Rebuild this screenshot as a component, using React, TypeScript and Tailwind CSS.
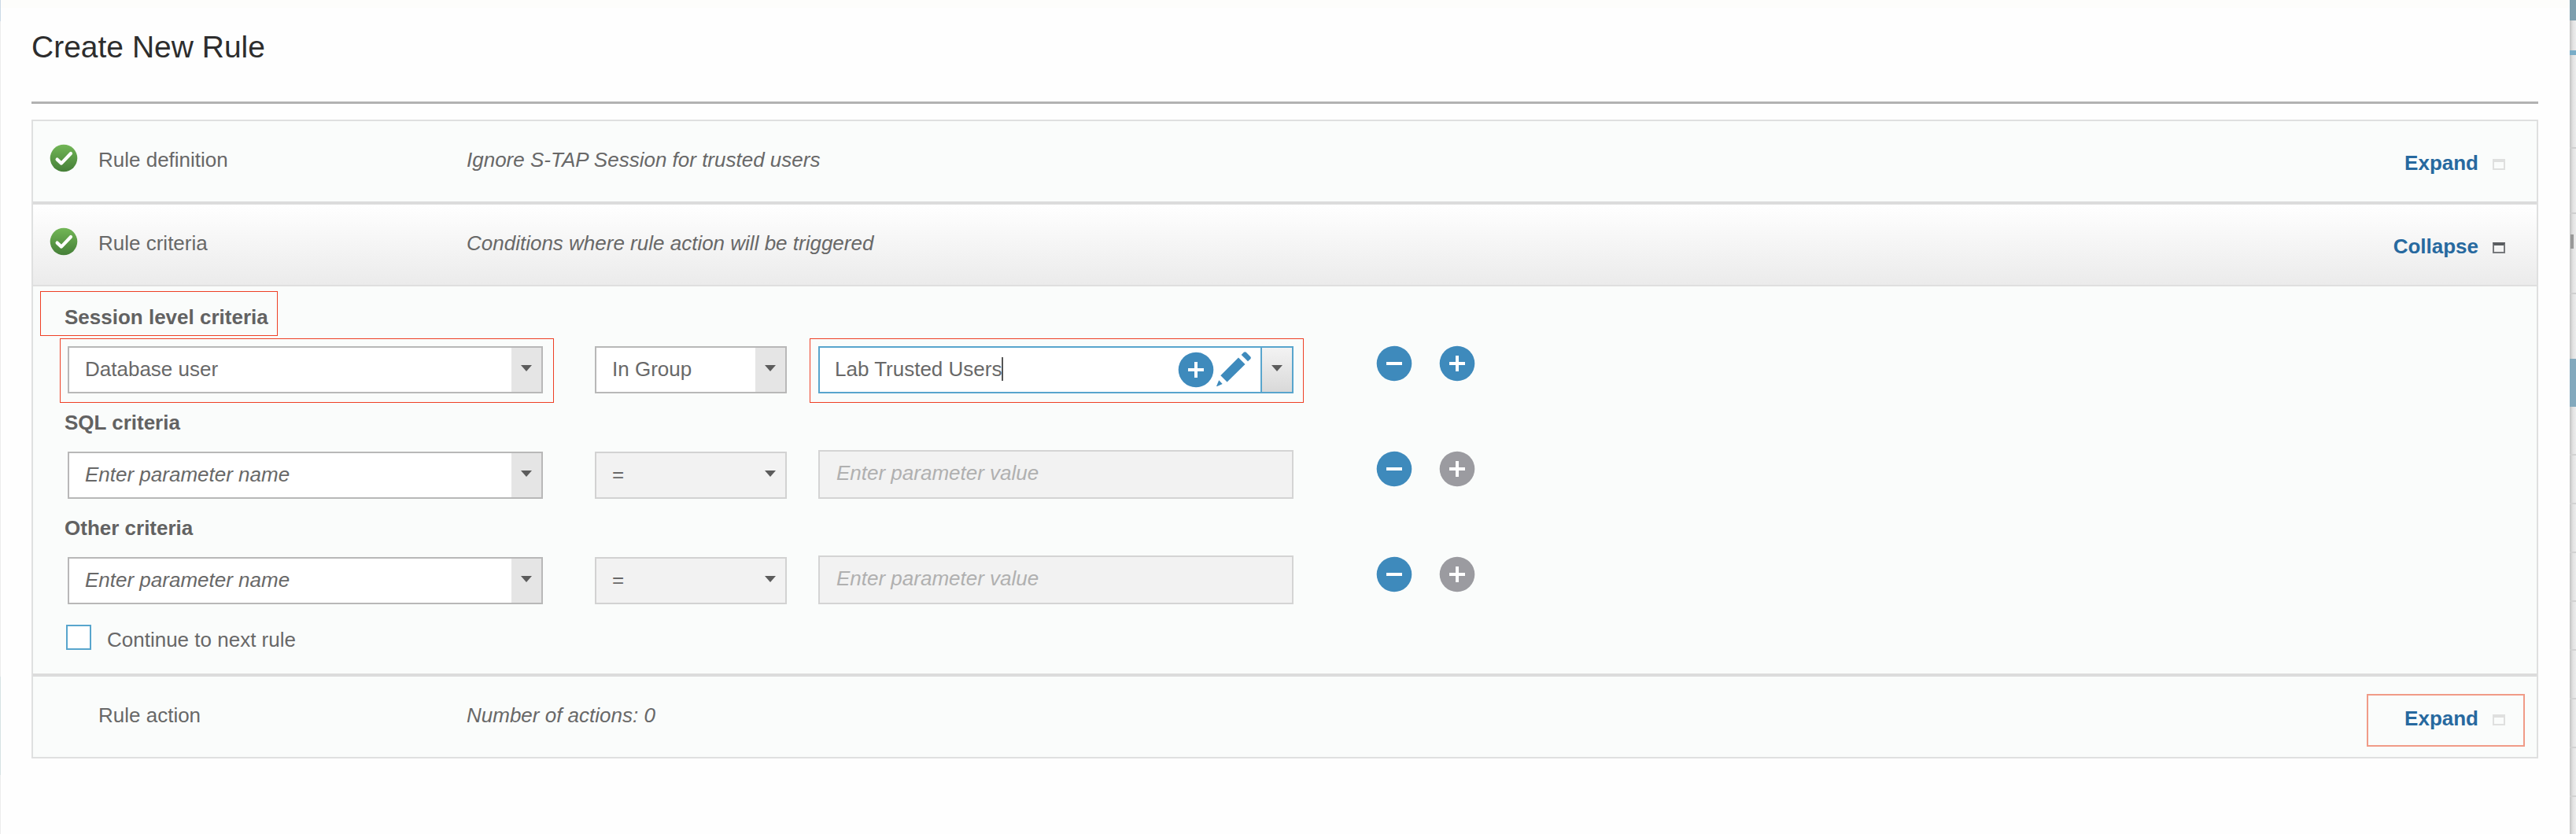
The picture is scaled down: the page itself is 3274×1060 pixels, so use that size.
import type { ReactNode } from "react";

const textBase = "text-[26px] leading-[30px] whitespace-pre";

function Check() {
  return (
    <svg width="36" height="36" viewBox="0 0 36 36" className="shrink-0">
      <defs>
        <linearGradient id="ok" x1="0" y1="0" x2="0" y2="1">
          <stop offset="0" stopColor="#72b656" />
          <stop offset="1" stopColor="#457f38" />
        </linearGradient>
      </defs>
      <circle cx="18" cy="18" r="17.3" fill="url(#ok)" />
      <path d="M9.6 19.6L15 24.6L27 12" fill="none" stroke="#fff" strokeWidth="4.2" strokeLinecap="round" strokeLinejoin="round" />
    </svg>
  );
}

function Triangle() {
  return (
    <svg width="14" height="8" viewBox="0 0 14 8" className="block">
      <path d="M0 0H14L7 8Z" fill="#5c5c5c" />
    </svg>
  );
}

function RoundIcon({ kind, muted = false }: { kind: "plus" | "minus"; muted?: boolean }) {
  return (
    <svg width="46" height="46" viewBox="0 0 46 46" className="block shrink-0">
      <circle cx="23" cy="23" r="22.3" fill={muted ? "#9b9ba0" : "#3e8abc"} />
      <path d={kind === "plus" ? "M13 23H33M23 13V33" : "M13 23H33"} stroke="#fff" strokeWidth="4" />
    </svg>
  );
}

function Pencil() {
  return (
    <svg width="44" height="44" viewBox="0 0 44 44" className="block shrink-0" fill="#3e8abc">
      <path d="M0 44L3.2 36.3L7.7 41L1 44Z" />
      <path d="M5.3 30.2L28 7.5L36.5 16L13.6 38.5Z" />
      <path d="M31.7 4L34.8 .8Q36.3-.5 37.8 .8L43.2 6.3Q44.5 7.7 43.2 9.2L40 12.3Z" />
    </svg>
  );
}

function StateBox({ dark = false }: { dark?: boolean }) {
  return (
    <span
      className={
        dark
          ? "block h-[14px] w-4 border-2 border-t-4 border-[#77797c] border-t-[#5a5d60]"
          : "block h-[14px] w-4 border-2 border-t-4 border-[#dfe0df]"
      }
    />
  );
}

function SectionHeader({ done, title, summary, action, dark = false, marked = false }: {
  done: boolean; title: string; summary: string; action: string; dark?: boolean; marked?: boolean;
}) {
  return (
    <div className="flex h-[102px] items-start pt-[34px] pl-[21px] pr-[40px] text-[#686868]">
      <div className="-mt-[5px] h-9 w-9">{done && <Check />}</div>
      <div className={`${textBase} ml-[26px] w-[468px]`}>{title}</div>
      <div className={`${textBase} italic`}>{summary}</div>
      <button className={`${textBase} relative mt-1 ml-auto flex items-start font-bold text-[#27699f]`}>
        <span>{action}</span>
        <span className="mt-[10px] ml-[18px]"><StateBox dark={dark} /></span>
        {marked && <span className="absolute -top-4 -right-[25px] h-[67px] w-[201px] border-2 border-[#f09b87]" />}
      </button>
    </div>
  );
}

function Select({ children, wide = false, disabled = false, marked = false }: {
  children: ReactNode; wide?: boolean; disabled?: boolean; marked?: boolean;
}) {
  return (
    <div
      className={`relative flex h-[60px] shrink-0 items-stretch border-2 ${wide ? "w-[604px]" : "w-[244px]"} ${
        disabled ? "border-[#d2d2d2] bg-[#f2f2f2]" : "border-[#b8b8b8] bg-white"
      }`}
    >
      <div className={`${textBase} flex-1 pt-[12px] pl-5 text-[#686868]`}>{children}</div>
      <div className={`flex w-[38px] items-center justify-center pb-1 ${disabled ? "" : "bg-[#e5e5e5]"}`}>
        <Triangle />
      </div>
      {marked && <span className="absolute -top-3 -left-3 h-[82px] w-[628px] border border-[#ee4026]" />}
    </div>
  );
}

function GroupInput() {
  return (
    <div className="relative flex h-[60px] w-[604px] shrink-0 border-2 border-[#58a5cd] bg-white">
      <div className={`${textBase} flex flex-1 pt-[12px] pl-[19px] text-[#686868]`}>
        <span>Lab Trusted Users</span>
        <span className="h-[30px] w-0.5 bg-[#555]" />
      </div>
      <div className="flex items-start gap-[3px] pt-[5px] pr-[12px]">
        <RoundIcon kind="plus" />
        <Pencil />
      </div>
      <div className="flex w-[40px] items-center justify-center border-l-2 border-[#58a5cd] bg-linear-to-b from-[#f3f3f3] to-[#d9d9d9] pb-1">
        <Triangle />
      </div>
      <span className="absolute -top-3 -left-[13px] h-[82px] w-[628px] border border-[#ee4026]" />
    </div>
  );
}

function Criteria({ label, marked = false, children, canAdd = false }: {
  label: string; marked?: boolean; children: ReactNode; canAdd?: boolean;
}) {
  return (
    <div className="h-[134px]">
      <div className="relative">
        <h3 className={`${textBase} font-bold text-[#626262]`}>{label}</h3>
        {marked && <span className="absolute -top-[18px] -left-[31px] h-[57px] w-[302px] border border-[#ee4026]" />}
      </div>
      <div className="mt-[22px] ml-1 flex h-[60px] items-end">
        {children}
        <div className="-mt-px ml-[105px] flex gap-[34px] self-start">
          <RoundIcon kind="minus" />
          <RoundIcon kind="plus" muted={!canAdd} />
        </div>
      </div>
    </div>
  );
}

function EmptyCriteria({ label }: { label: string }) {
  return (
    <Criteria label={label}>
      <Select wide><i>Enter parameter name</i></Select>
      <span className="w-[66px]" />
      <Select disabled>=</Select>
      <span className="w-10" />
      <div className={`${textBase} h-[62px] w-[604px] shrink-0 border-2 border-[#d4d4d4] bg-[#f2f2f2] pt-3 pl-[21px] italic text-[#b0b0b0]`}>
        Enter parameter value
      </div>
    </Criteria>
  );
}

function PageBehind() {
  return (
    <aside className="flex w-2 shrink-0 flex-col overflow-hidden bg-linear-to-r from-[#c2c2c2] via-[#e2e2e2] to-[#ededed]">
      <div className="h-[26px] shrink-0 bg-[#7d9fae]" />
      <div className="h-[38px] shrink-0" />
      <div className="h-[6px] shrink-0 bg-[#79adc8]" />
      <div className="h-[119px] shrink-0 border-b-2 border-[#cfcfcf]" />
      <div className="h-[83px] shrink-0 border-b-2 border-[#cfcfcf]" />
      <div className="h-[26px] shrink-0" />
      <div className="ml-px h-[18px] w-[4px] shrink-0 bg-[#999]" />
      <div className="h-[58px] shrink-0 border-b-2 border-[#cfcfcf]" />
      <div className="h-[82px] shrink-0" />
      <div className="h-[61px] shrink-0 bg-[#83a9bd]" />
      {[0, 1, 2, 3, 4, 5, 6, 7].map((i) => (
        <div key={i} className="h-[62px] shrink-0 border-b-2 border-[#d2d2d2]" />
      ))}
    </aside>
  );
}

export default function App() {
  return (
    <div className="flex h-[1060px] w-[3274px] overflow-hidden bg-white font-['Liberation_Sans',Arial,sans-serif]">
      <div className="flex w-px shrink-0 flex-col bg-[#ececec]">
        <div className="h-[27px] bg-[#cbd9e6]" />
        <div className="mt-[833px] h-[125px] bg-[#d6e2e4]" />
      </div>
      <main className="flex w-[3265px] shrink-0 flex-col bg-[#fefefe]">
        <div className="h-2.5 bg-[#fdfdfb]" />
        <h1 className="mt-7 ml-[39px] h-[91px] text-[39px] leading-[44px] text-[#2d2d2d]">Create New Rule</h1>
        <div className="ml-[39px] h-[3px] w-[3186px] bg-[#b2b2b2]" />
        <section className="mt-5 ml-[39px] flex h-[812px] w-[3186px] flex-col border-2 border-[#dfe0e0] bg-[#fafcfb]">
          <SectionHeader done title="Rule definition" summary="Ignore S-TAP Session for trusted users" action="Expand" />
          <div className="h-1 shrink-0 bg-[#dcdcdc]" />
          <div className="bg-linear-to-b from-white to-[#ebebeb]">
            <SectionHeader done title="Rule criteria" summary="Conditions where rule action will be triggered" action="Collapse" dark />
          </div>
          <div className="h-0.5 shrink-0 bg-[#dfdfdf]" />
          <div className="h-[492px] pt-6 pl-10">
            <Criteria label="Session level criteria" marked canAdd>
              <Select wide marked>Database user</Select>
              <span className="w-[66px]" />
              <Select>In Group</Select>
              <span className="w-10" />
              <GroupInput />
            </Criteria>
            <EmptyCriteria label="SQL criteria" />
            <EmptyCriteria label="Other criteria" />
            <label className="mt-1 ml-0.5 flex items-start">
              <span className="h-8 w-8 border-2 border-[#58a5cd] bg-white" />
              <span className={`${textBase} mt-1 ml-5 text-[#686868]`}>Continue to next rule</span>
            </label>
          </div>
          <div className="h-1 shrink-0 bg-[#dcdcdc]" />
          <SectionHeader done={false} title="Rule action" summary="Number of actions: 0" action="Expand" marked />
        </section>
      </main>
      <PageBehind />
    </div>
  );
}
